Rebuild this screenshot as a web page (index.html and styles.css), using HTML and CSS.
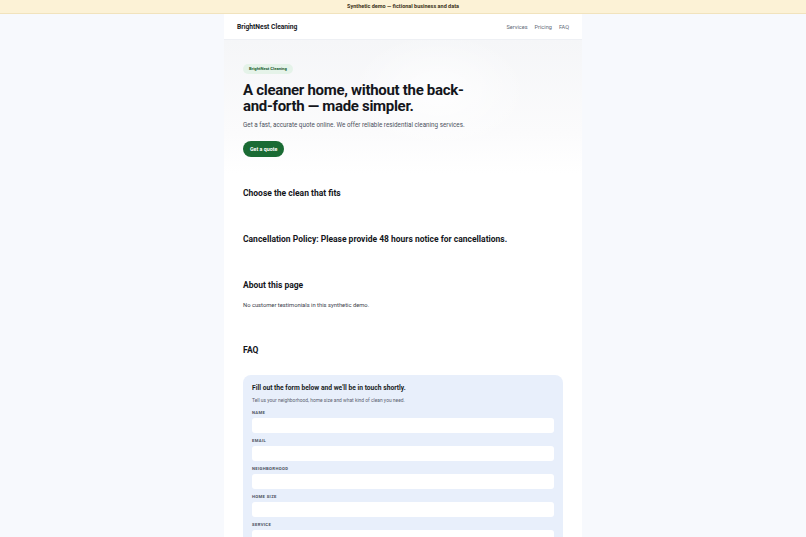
FILE: index.html
```html
<!DOCTYPE html>
<html lang="en">
<head>
<meta charset="utf-8">
<title>BrightNest Cleaning</title>
<link rel="stylesheet" href="styles.css">
</head>
<body>
<div class="banner">Synthetic demo — fictional business and data</div>
<div class="page">
  <header class="site-header">
    <div class="brand">BrightNest Cleaning</div>
    <nav class="nav">
      <a href="#">Services</a>
      <a href="#">Pricing</a>
      <a href="#">FAQ</a>
    </nav>
  </header>
  <section class="hero">
    <span class="badge">BrightNest Cleaning</span>
    <h1 class="hero-title">A cleaner home, without the back-and-forth — made simpler.</h1>
    <p class="hero-sub">Get a fast, accurate quote online. We offer reliable residential cleaning services.</p>
    <a class="btn" href="#">Get a quote</a>
  </section>
  <section class="section">
    <h2 class="section-title">Choose the clean that fits</h2>
  </section>
  <section class="section">
    <h2 class="section-title">Cancellation Policy: Please provide 48 hours notice for cancellations.</h2>
  </section>
  <section class="section">
    <h2 class="section-title">About this page</h2>
    <p class="section-text">No customer testimonials in this synthetic demo.</p>
  </section>
  <section class="section">
    <h2 class="section-title">FAQ</h2>
    <form class="card">
      <h3 class="card-title">Fill out the form below and we'll be in touch shortly.</h3>
      <p class="card-sub">Tell us your neighborhood, home size and what kind of clean you need.</p>
      <div class="field"><label class="label">Name</label><input class="input" type="text"></div>
      <div class="field"><label class="label">Email</label><input class="input" type="text"></div>
      <div class="field"><label class="label">Neighborhood</label><input class="input" type="text"></div>
      <div class="field"><label class="label">Home size</label><input class="input" type="text"></div>
      <div class="field"><label class="label">Service</label><input class="input" type="text"></div>
    </form>
  </section>
</div>
</body>
</html>
```
FILE: styles.css
```css
* { box-sizing: border-box; }
html, body { margin: 0; padding: 0; }
body {
  background: #f7f9fd;
  font-family: Roboto, "Liberation Sans", Arial, sans-serif;
  color: #16181d;
}
.banner {
  height: 14px;
  background: #fcf2d6;
  border-bottom: 1px solid #f1e3bd;
  text-align: center;
  font-size: 5.5px;
  line-height: 13px;
  font-weight: 700;
  color: #3b3320;
}
.page {
  width: 358px;
  margin: 0 auto;
  background: #ffffff;
  min-height: 600px;
}
.site-header {
  height: 26px;
  padding: 0 13px;
  display: flex;
  align-items: center;
  justify-content: space-between;
  border-bottom: 1px solid #eef0f4;
}
.brand {
  font-size: 6.7px;
  font-weight: 700;
  color: #16181d;
}
.nav { display: flex; gap: 7px; }
.nav a {
  font-size: 5.6px;
  color: #646b77;
  text-decoration: none;
}
.hero {
  display: flex;
  flex-direction: column;
  align-items: flex-start;
  padding: 24px 19px 16px;
  background:
    radial-gradient(ellipse 90px 60px at 60% 40%, rgba(255,255,255,0.8), rgba(255,255,255,0)),
    linear-gradient(180deg, #f5f6f8 0%, #fbfbfc 70%, #ffffff 100%);
}
.badge {
  display: block;
  background: #e5f3e9;
  color: #1b5e31;
  font-size: 4.2px;
  font-weight: 700;
  line-height: 10px;
  padding: 0 6px;
  border-radius: 6px;
}
.hero-title {
  margin: 7.5px 0 0;
  width: 225px;
  font-size: 15px;
  line-height: 16.5px;
  font-weight: 700;
  letter-spacing: -0.3px;
  color: #14161b;
}
.hero-sub {
  margin: 6.5px 0 0;
  font-size: 6.3px;
  line-height: 9px;
  color: #4b5260;
}
.btn {
  display: block;
  margin-top: 11px;
  height: 16px;
  line-height: 16px;
  padding: 0 7px;
  border-radius: 8px;
  background: #1a6b34;
  color: #ffffff;
  font-size: 5.3px;
  font-weight: 700;
  text-decoration: none;
}
.section {
  padding: 14px 19px 10px;
}
.section-title {
  margin: 0 0 10px;
  font-size: 8.5px;
  line-height: 12px;
  font-weight: 700;
  color: #14161b;
}
.section-text {
  margin: 0 0 10px;
  font-size: 5.8px;
  line-height: 9px;
  color: #3a404b;
}
.card {
  margin: 19px 0 0;
  background: #e8effb;
  border-radius: 8px;
  padding: 8px 9px 10px;
}
.card-title {
  margin: 0;
  font-size: 6.7px;
  line-height: 10px;
  font-weight: 700;
  color: #1a1d24;
}
.card-sub {
  margin: 4px 0 7px;
  font-size: 4.9px;
  line-height: 6px;
  color: #5a6170;
}
.field { margin-bottom: 5px; }
.label {
  display: block;
  font-size: 4.2px;
  line-height: 6px;
  font-weight: 700;
  letter-spacing: 0.35px;
  text-transform: uppercase;
  color: #4a505c;
}
.input {
  display: block;
  margin-top: 2px;
  width: 100%;
  height: 15px;
  border: none;
  border-radius: 3px;
  background: #ffffff;
  padding: 0 4px;
}
```
